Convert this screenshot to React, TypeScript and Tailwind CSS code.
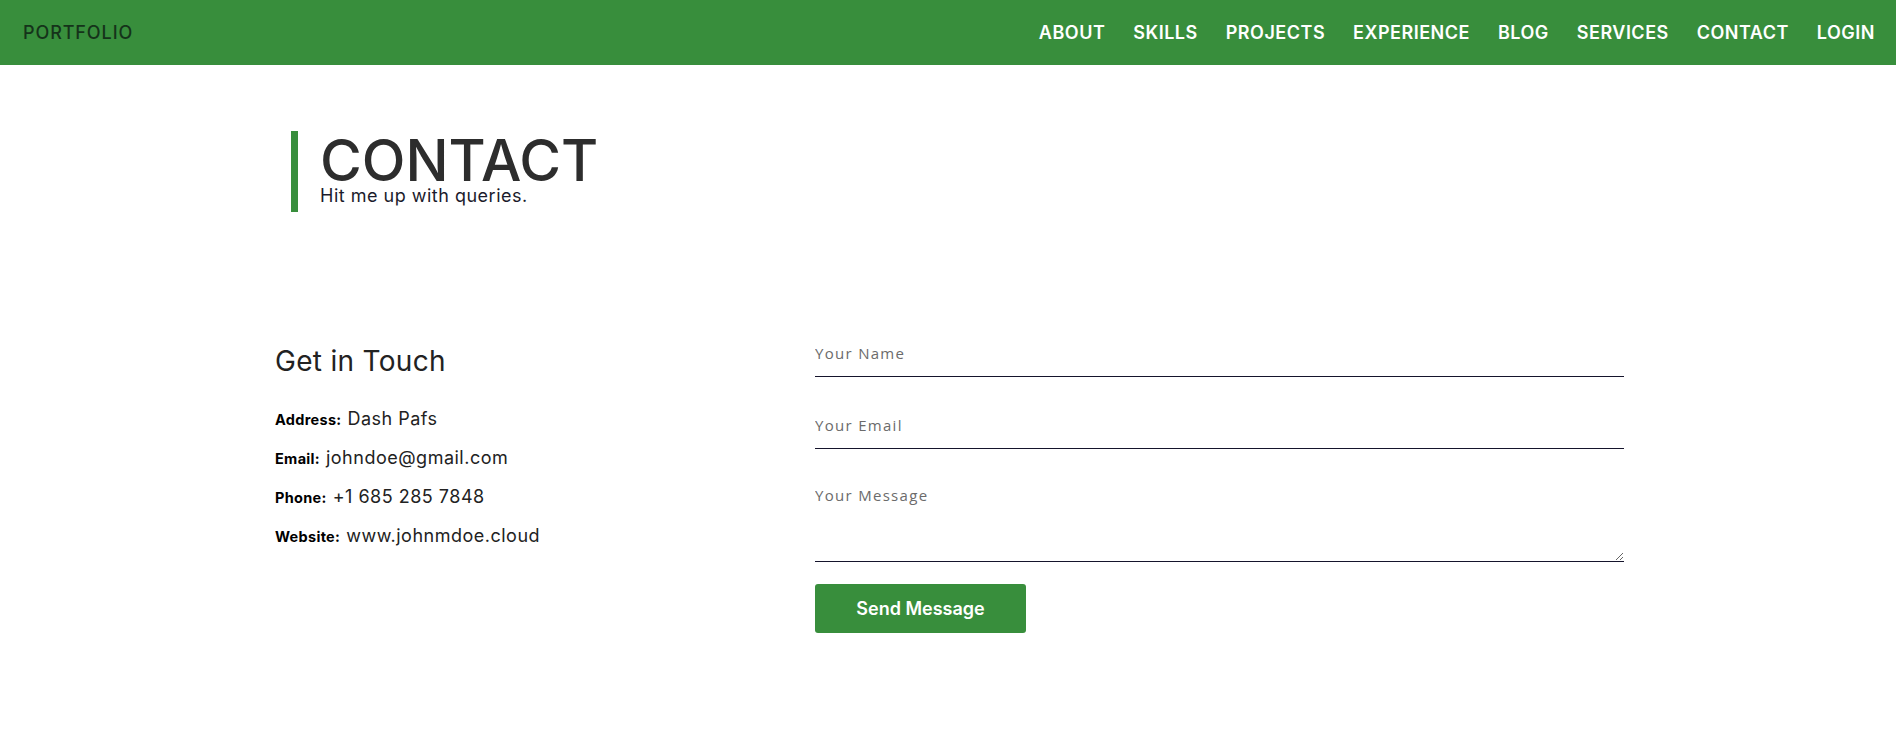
import React from "react";

const links = ["ABOUT", "SKILLS", "PROJECTS", "EXPERIENCE", "BLOG", "SERVICES", "CONTACT", "LOGIN"];

const info = [
  { label: "Address:", value: "Dash Pafs" },
  { label: "Email:", value: "johndoe@gmail.com" },
  { label: "Phone:", value: "+1 685 285 7848" },
  { label: "Website:", value: "www.johnmdoe.cloud" },
];

const App = () => {
  return (
    <div className="min-h-screen bg-white" style={{ fontFamily: "Inter, 'DejaVu Sans', sans-serif" }}>
      {/* navbar */}
      <nav className="h-[65px] bg-[#388e3c] flex items-center justify-between pl-[23px] pr-[21px]">
        <a className="text-[18px] tracking-[0.9px] text-[#15331a] font-medium">PORTFOLIO</a>
        <ul className="flex items-center gap-[28px]">
          {links.map((l) => (
            <li key={l} className="text-[18px] tracking-[0.5px] font-semibold text-white">{l}</li>
          ))}
        </ul>
      </nav>

      <div className="w-[1350px] mx-auto">
        {/* heading */}
        <div className="mt-[66px] ml-[18px] border-l-[7px] border-[#388e3c] pl-[22px] h-[81px]">
          <h1 className="text-[57px] leading-[56px] font-medium text-[#2d2d2d] pt-[2px]">CONTACT</h1>
          <p className="text-[18px] leading-[14px] tracking-[0.5px] text-[#1b1b2b]">Hit me up with queries.</p>
        </div>

        <div className="grid grid-cols-[542px_1fr] mt-[125px]">
          {/* left */}
          <div className="pl-[2px]">
            <h3 className="text-[28px] leading-[34px] tracking-[0.3px] text-[#222] mt-[7px]">Get in Touch</h3>
            <div className="mt-[28px] flex flex-col gap-[13px]">
              {info.map((i) => (
                <div key={i.label} className="flex items-baseline gap-[6px] leading-[25px]">
                  <span className="text-[14.5px] tracking-[0.3px] font-bold text-black">{i.label}</span>
                  <span className="text-[18px] tracking-[0.5px] text-[#222]">{i.value}</span>
                </div>
              ))}
            </div>
          </div>

          {/* form */}
          <form className="flex flex-col w-[809px]" style={{ fontFamily: "'Open Sans', sans-serif" }}>
            <input
              type="text"
              placeholder="Your Name"
              className="w-full h-[40px] pt-[6px] pb-[14px] leading-[20px] text-[15px] tracking-[1.3px] border-b-[1.5px] border-[#15142c] outline-none placeholder:text-[#6b6b6b]"
            />
            <input
              type="email"
              placeholder="Your Email"
              className="mt-[32px] w-full h-[40px] pt-[6px] pb-[14px] leading-[20px] text-[15px] tracking-[1.3px] border-b-[1.5px] border-[#15142c] outline-none placeholder:text-[#6b6b6b]"
            />
            <textarea
              placeholder="Your Message"
              className="mt-[32px] w-full h-[81px] pt-[4px] leading-[20px] text-[15px] tracking-[1.3px] border-b-[1.5px] border-[#15142c] outline-none placeholder:text-[#6b6b6b]"
            />
            <button
              type="button"
              className="mt-[22px] w-[211px] h-[49px] rounded-[3px] bg-[#388e3c] text-white text-[18px] font-semibold"
              style={{ fontFamily: "Inter, 'DejaVu Sans', sans-serif" }}
            >
              Send Message
            </button>
          </form>
        </div>
      </div>
    </div>
  );
};

export default App;
